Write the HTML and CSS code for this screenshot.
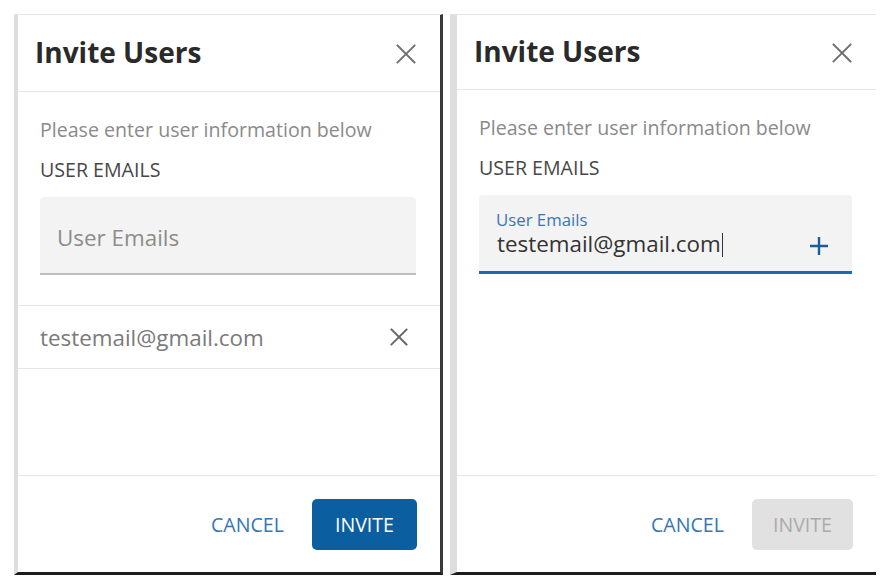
FILE: index.html
```
<!DOCTYPE html>
<html lang="en">
<head>
    <meta charset="UTF-8">
    <meta name="viewport" content="width=device-width, initial-scale=1.0">
    <title>Invite Users</title>
    <link rel="stylesheet" href="styles.css">
</head>
<body>
    <div class="screens">
        <!-- empty field, one email already added -->
        <section class="dialog dialog-left">
            <header class="dialog-head">
                <h2 class="dialog-title">Invite Users</h2>
                <button class="icon-btn close-btn" aria-label="Close">
                    <svg width="20" height="20" viewBox="0 0 20 20"><path d="M1.5 1.5L18.5 18.5M18.5 1.5L1.5 18.5"/></svg>
                </button>
            </header>
            <div class="dialog-body">
                <div class="fields">
                    <p class="hint">Please enter user information below</p>
                    <div class="field-label">USER EMAILS</div>
                    <div class="email-input">
                        <span class="placeholder">User Emails</span>
                    </div>
                </div>
                <ul class="email-list">
                    <li class="email-row">
                        <span>testemail@gmail.com</span>
                        <button class="icon-btn remove-btn" aria-label="Remove">
                            <svg width="18" height="18" viewBox="0 0 18 18"><path d="M1.5 1.5L16.5 16.5M16.5 1.5L1.5 16.5"/></svg>
                        </button>
                    </li>
                </ul>
            </div>
            <footer class="dialog-foot">
                <button class="btn btn-text">CANCEL</button>
                <button class="btn btn-primary">INVITE</button>
            </footer>
        </section>

        <!-- typing in the field -->
        <section class="dialog dialog-right">
            <header class="dialog-head">
                <h2 class="dialog-title">Invite Users</h2>
                <button class="icon-btn close-btn" aria-label="Close">
                    <svg width="20" height="20" viewBox="0 0 20 20"><path d="M1.5 1.5L18.5 18.5M18.5 1.5L1.5 18.5"/></svg>
                </button>
            </header>
            <div class="dialog-body">
                <div class="fields">
                    <p class="hint">Please enter user information below</p>
                    <div class="field-label">USER EMAILS</div>
                    <div class="email-input is-focused">
                        <span class="float-label">User Emails</span>
                        <div class="value-row">
                            <span class="value">testemail@gmail.com<span class="caret"></span></span>
                            <button class="icon-btn add-btn" aria-label="Add">
                                <svg width="20" height="20" viewBox="0 0 20 20"><path d="M10 1V19M1 10H19"/></svg>
                            </button>
                        </div>
                    </div>
                </div>
            </div>
            <footer class="dialog-foot">
                <button class="btn btn-text">CANCEL</button>
                <button class="btn btn-primary" disabled>INVITE</button>
            </footer>
        </section>
    </div>
</body>
</html>
```

FILE: styles.css
```
body {
    margin: 0;
    background: #fff;
    font-family: "Open Sans", "Noto Sans", sans-serif;
    color: #333;
}
.screens {
    display: flex;
    gap: 7px;
    padding: 14px 0 0 14px;
}
.dialog {
    box-sizing: border-box;
    height: 561px;
    display: flex;
    flex-direction: column;
    background: #fff;
    border-top: 1px solid #e6e6e6;
    border-left: 4px solid #dedede;
    border-bottom: 3px solid #1c1c1c;
}
.dialog-left {
    width: 429px;
    border-right: 3px solid #3a3a3a;
}
.dialog-right {
    width: 426px;
    border-left-width: 7px;
}
.dialog-head {
    box-sizing: border-box;
    height: 77px;
    display: flex;
    justify-content: space-between;
    align-items: flex-start;
    padding: 18px 24px 0 17px;
    border-bottom: 1px solid #e6e6e6;
}
.dialog-right .dialog-head {
    height: 75px;
    padding-top: 17px;
}
.dialog-title {
    margin: 0;
    font-size: 28px;
    line-height: 38px;
    font-weight: 700;
    color: #2a2a2a;
}
.icon-btn {
    background: none;
    border: 0;
    padding: 0;
    cursor: pointer;
    display: flex;
}
.icon-btn svg {
    fill: none;
    stroke-linecap: square;
}
.close-btn {
    margin-top: 11px;
}
.close-btn svg {
    stroke: #707070;
    stroke-width: 1.9;
}
.dialog-body {
    flex: 1;
    padding-top: 24px;
}
.fields {
    padding: 0 24px 0 22px;
}
.hint {
    margin: 0 0 13px;
    font-size: 19.6px;
    line-height: 27px;
    color: #8a8a8a;
}
.field-label {
    margin-bottom: 14px;
    font-size: 19.6px;
    line-height: 27px;
    color: #474747;
}
.email-input {
    height: 76px;
    background: #f3f3f3;
    border-radius: 4px 4px 0 0;
    border-bottom: 2px solid #bdbdbd;
}
.placeholder {
    display: block;
    padding: 26px 0 0 17px;
    font-size: 22.4px;
    line-height: 30px;
    color: #8c8c8c;
}
.email-input.is-focused {
    border-bottom: 3px solid #1a6cb0;
    padding: 16px 23px 0 17px;
    box-sizing: border-box;
    height: 79px;
}
.float-label {
    display: block;
    font-size: 16.8px;
    line-height: 17px;
    color: #3a78b5;
}
.value-row {
    display: flex;
    justify-content: space-between;
    align-items: center;
    margin-top: 2px;
}
.value {
    padding-left: 1px;
    font-size: 22.4px;
    line-height: 28px;
    color: #333;
}
.caret {
    display: inline-block;
    width: 1.5px;
    height: 24px;
    margin-left: 1px;
    background: #333;
    vertical-align: -5px;
}
.add-btn {
    margin-top: 3px;
}
.add-btn svg {
    stroke: #1d5c9b;
    stroke-width: 2.4;
    stroke-linecap: butt;
}
.email-list {
    list-style: none;
    margin: 30px 0 0;
    padding: 0;
    border-top: 1px solid #e6e6e6;
    border-bottom: 1px solid #e6e6e6;
}
.email-row {
    height: 62px;
    display: flex;
    justify-content: space-between;
    align-items: center;
    padding: 0 32px 0 22px;
    font-size: 22.4px;
    color: #7a7a7a;
}
.remove-btn svg {
    stroke: #666;
    stroke-width: 1.9;
}
.dialog-foot {
    box-sizing: border-box;
    height: 97px;
    display: flex;
    justify-content: flex-end;
    align-items: center;
    gap: 16px;
    padding-right: 23px;
    border-top: 1px solid #e6e6e6;
}
.btn {
    height: 51px;
    border: 0;
    border-radius: 5px;
    padding: 0 23px;
    font-family: inherit;
    font-size: 19.6px;
    cursor: pointer;
}
.btn-text {
    background: none;
    padding: 0 12px;
    color: #3675b3;
}
.btn-primary {
    background: #0b5e9f;
    color: #fff;
}
.btn-primary:disabled {
    background: #e1e1e1;
    color: #ababab;
    cursor: default;
    padding: 0 21px;
}
```
